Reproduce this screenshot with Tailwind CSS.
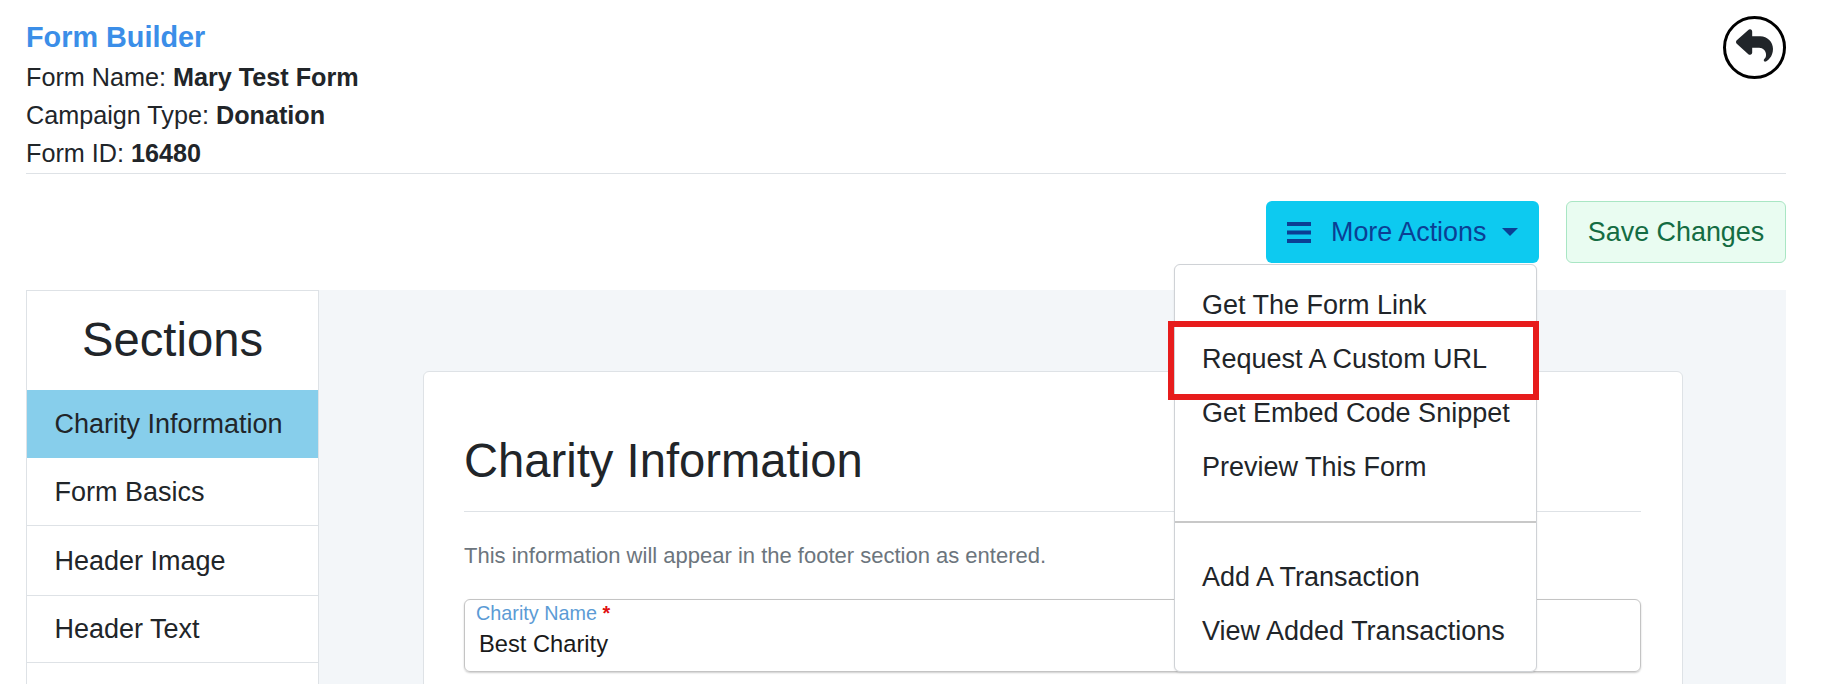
<!DOCTYPE html>
<html lang="en">
  <head>
    <meta charset="utf-8" />
    <meta content="width=device-width, initial-scale=1.0" name="viewport" />
    <title>Form Builder</title>
    <script src="https://cdn.jsdelivr.net/npm/@tailwindcss/browser@4"></script>
  </head>
  <body class="relative h-[684px] overflow-hidden bg-white font-['Liberation_Sans',Arial,sans-serif] text-[#212529]">
    <div class="pr-[35px] pl-[26px]">
      <!-- header -->
      <div class="flex justify-between border-b border-[#dee2e6] pt-[16px] pb-px">
        <div>
          <h1 class="h-[42px] text-[28.8px] leading-[42px] font-bold text-[#3b8ee8]">Form Builder</h1>
          <p class="h-[38px] text-[25.2px] leading-[38px]">Form Name: <b>Mary Test Form</b></p>
          <p class="h-[38px] text-[25.2px] leading-[38px]">Campaign Type: <b>Donation</b></p>
          <p class="h-[38px] text-[25.2px] leading-[38px]">Form ID: <b>16480</b></p>
        </div>
        <div class="flex h-[63px] w-[63px] items-center justify-center rounded-full border-[3px] border-black">
          <svg class="mb-[4px] h-[37px] w-[37px]" viewBox="0 0 512 512" fill="#212529">
            <path d="M205 34.8c11.5 5.1 19 16.6 19 29.2v64H336c97.2 0 176 78.8 176 176c0 113.3-81.5 163.9-100.2 174.1c-2.5 1.4-5.3 1.9-8.1 1.9c-10.9 0-19.7-8.9-19.7-19.7c0-7.5 4.3-14.4 9.8-19.5c9.4-8.8 22.2-26.4 22.2-56.7c0-53-43-96-96-96H224v64c0 12.6-7.4 24.1-19 29.2s-25 3-34.4-5.4l-160-144C3.9 225.7 0 217.1 0 208s3.9-17.7 10.6-23.8l160-144c9.4-8.5 22.9-10.6 34.4-5.4z" />
          </svg>
        </div>
      </div>

      <!-- actions -->
      <div class="flex justify-end gap-[27px] py-[27px]">
        <button class="flex h-[62px] w-[273px] items-center rounded-[6px] bg-[#0dcaf0] pl-[21px] text-[26.9px] text-[#0b3f94]">
          <svg class="h-[21px] w-[24px]" viewBox="0 0 24 21" fill="#0b3f94">
            <rect width="24" height="4" />
            <rect y="8.5" width="24" height="4" />
            <rect y="17" width="24" height="4" />
          </svg>
          <span class="ml-[20px]">More Actions</span>
          <svg class="ml-[16px] h-[8px] w-[16px]" viewBox="0 0 16 8" fill="#0b3f94">
            <path d="M0 0h16L8 8z" />
          </svg>
        </button>
        <button class="h-[62px] w-[220px] rounded-[6px] border border-[#a9e6c4] bg-[#e9fcf1] text-[26.9px] text-[#146c43]">Save Changes</button>
      </div>

      <div class="flex">
        <!-- sidebar -->
        <div class="w-[293px] shrink-0 border-x border-t border-[#dee2e6] text-[27px]">
          <div class="flex h-[99px] items-center justify-center text-[47.2px]">Sections</div>
          <div class="flex h-[68px] items-center bg-[#87ceeb] pl-[27.5px]">Charity Information</div>
          <div class="flex h-[68px] items-center border-b border-[#dee2e6] pt-px pl-[27.5px]">Form Basics</div>
          <div class="flex h-[70px] items-center border-b border-[#dee2e6] pt-px pl-[27.5px]">Header Image</div>
          <div class="flex h-[67px] items-center border-b border-[#dee2e6] pl-[27.5px]">Header Text</div>
        </div>

        <!-- content -->
        <div class="h-[394px] flex-1 overflow-hidden bg-[#f3f6f9] pt-[81px] pr-[103px] pl-[104px]">
          <div class="h-[400px] rounded-[6px] border border-[#dee2e6] bg-white pr-[41px] pl-[40px]">
            <h2 class="flex h-[140px] items-center border-b border-[#dee2e6] pt-[39px] text-[47.2px]">Charity Information</h2>
            <p class="flex h-[87px] items-center text-[22px] text-[#6c757d]">This information will appear in the footer section as entered.</p>
            <div class="h-[73px] rounded-[6px] border border-[#c4c4c4] pl-[11px] shadow-[0_1px_2px_rgba(0,0,0,0.2)]">
              <div class="h-[27px] text-[19.8px] leading-[27px] text-[#5b9bd5]">Charity Name <span class="font-bold text-[#e01010]">*</span></div>
              <div class="pl-[3px] text-[23.7px] leading-[34px] text-[#1a1a1a]">Best Charity</div>
            </div>
          </div>
        </div>
      </div>
    </div>

    <!-- open dropdown menu -->
    <div class="absolute top-[264px] left-[1174px] h-[408px] w-[363px] rounded-[6px] border border-[#cfd2d6] bg-white text-[27px] shadow-[0_1px_2px_rgba(0,0,0,0.1)]">
      <div class="pt-[13px] pl-[27px]">
        <div class="flex h-[54px] items-center">Get The Form Link</div>
        <div class="flex h-[54px] items-center">Request A Custom URL</div>
        <div class="flex h-[54px] items-center">Get Embed Code Snippet</div>
        <div class="flex h-[54px] items-center">Preview This Form</div>
      </div>
      <div class="mt-[27px] h-[2px] bg-[#c8c8c8]"></div>
      <div class="pt-[27px] pl-[27px]">
        <div class="flex h-[54px] items-center">Add A Transaction</div>
        <div class="flex h-[54px] items-center">View Added Transactions</div>
      </div>
    </div>

    <!-- annotation box -->
    <div class="absolute top-[321px] left-[1168px] h-[79px] w-[371px] border-[6px] border-[#e71c1c]"></div>
  </body>
</html>
